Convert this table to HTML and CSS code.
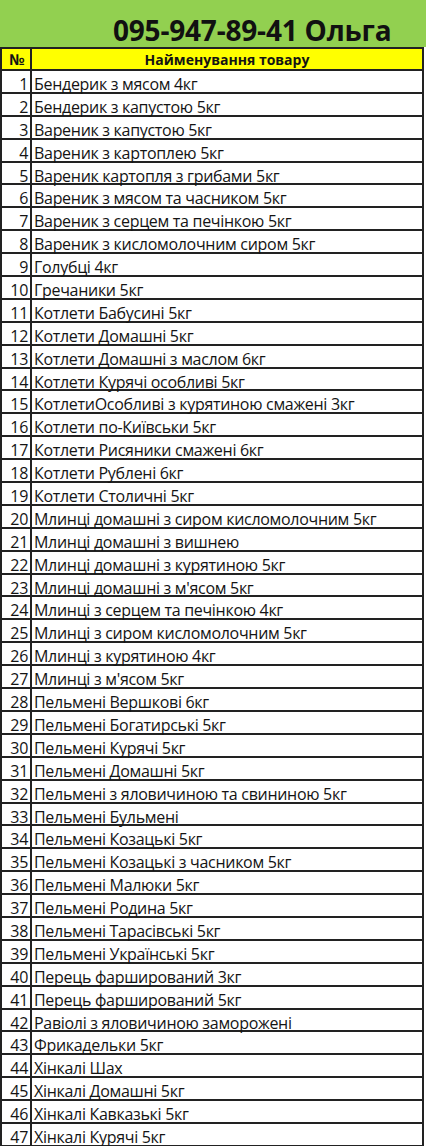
FILE: index.html
```html
<!DOCTYPE html>
<html lang="uk">
<head>
<meta charset="utf-8">
<title>Прайс</title>
<link rel="stylesheet" href="styles.css">
</head>
<body>
<div class="banner"><span class="phone">095-947-89-41 Ольга</span></div>
<table class="list">
<thead>
<tr><th class="num">№</th><th class="name">Найменування товару</th></tr>
</thead>
<tbody>
<tr><td class="num">1</td><td>Бендерик з мясом 4кг</td></tr>
<tr><td class="num">2</td><td>Бендерик з капустою 5кг</td></tr>
<tr><td class="num">3</td><td>Вареник з капустою 5кг</td></tr>
<tr><td class="num">4</td><td>Вареник з картоплею 5кг</td></tr>
<tr><td class="num">5</td><td>Вареник картопля з грибами 5кг</td></tr>
<tr><td class="num">6</td><td>Вареник з мясом та часником 5кг</td></tr>
<tr><td class="num">7</td><td>Вареник з серцем та печінкою 5кг</td></tr>
<tr><td class="num">8</td><td>Вареник з кисломолочним сиром 5кг</td></tr>
<tr><td class="num">9</td><td>Голубці 4кг</td></tr>
<tr><td class="num">10</td><td>Гречаники 5кг</td></tr>
<tr><td class="num">11</td><td>Котлети Бабусині 5кг</td></tr>
<tr><td class="num">12</td><td>Котлети Домашні 5кг</td></tr>
<tr><td class="num">13</td><td>Котлети Домашні з маслом 6кг</td></tr>
<tr><td class="num">14</td><td>Котлети Курячі особливі 5кг</td></tr>
<tr><td class="num">15</td><td>КотлетиОсобливі з курятиною смажені 3кг</td></tr>
<tr><td class="num">16</td><td>Котлети по-Київськи 5кг</td></tr>
<tr><td class="num">17</td><td>Котлети Рисяники смажені 6кг</td></tr>
<tr><td class="num">18</td><td>Котлети Рублені 6кг</td></tr>
<tr><td class="num">19</td><td>Котлети Столичні 5кг</td></tr>
<tr><td class="num">20</td><td>Млинці домашні з сиром кисломолочним 5кг</td></tr>
<tr><td class="num">21</td><td>Млинці домашні з вишнею</td></tr>
<tr><td class="num">22</td><td>Млинці домашні з курятиною 5кг</td></tr>
<tr><td class="num">23</td><td>Млинці домашні з м'ясом 5кг</td></tr>
<tr><td class="num">24</td><td>Млинці з серцем та печінкою 4кг</td></tr>
<tr><td class="num">25</td><td>Млинці з сиром кисломолочним 5кг</td></tr>
<tr><td class="num">26</td><td>Млинці з курятиною 4кг</td></tr>
<tr><td class="num">27</td><td>Млинці з м'ясом 5кг</td></tr>
<tr><td class="num">28</td><td>Пельмені Вершкові 6кг</td></tr>
<tr><td class="num">29</td><td>Пельмені Богатирські 5кг</td></tr>
<tr><td class="num">30</td><td>Пельмені Курячі 5кг</td></tr>
<tr><td class="num">31</td><td>Пельмені Домашні 5кг</td></tr>
<tr><td class="num">32</td><td>Пельмені з яловичиною та свининою 5кг</td></tr>
<tr><td class="num">33</td><td>Пельмені Бульмені</td></tr>
<tr><td class="num">34</td><td>Пельмені Козацькі 5кг</td></tr>
<tr><td class="num">35</td><td>Пельмені Козацькі з часником 5кг</td></tr>
<tr><td class="num">36</td><td>Пельмені Малюки 5кг</td></tr>
<tr><td class="num">37</td><td>Пельмені Родина 5кг</td></tr>
<tr><td class="num">38</td><td>Пельмені Тарасівські 5кг</td></tr>
<tr><td class="num">39</td><td>Пельмені Українські 5кг</td></tr>
<tr><td class="num">40</td><td>Перець фарширований 3кг</td></tr>
<tr><td class="num">41</td><td>Перець фарширований 5кг</td></tr>
<tr><td class="num">42</td><td>Равіолі з яловичиною заморожені</td></tr>
<tr><td class="num">43</td><td>Фрикадельки 5кг</td></tr>
<tr><td class="num">44</td><td>Хінкалі Шах</td></tr>
<tr><td class="num">45</td><td>Хінкалі Домашні 5кг</td></tr>
<tr><td class="num">46</td><td>Хінкалі Кавказькі 5кг</td></tr>
<tr><td class="num">47</td><td>Хінкалі Курячі 5кг</td></tr>
</tbody>
</table>
</body>
</html>
```
FILE: styles.css
```css
html, body {
  margin: 0;
  padding: 0;
  background: #ffffff;
}
body {
  font-family: "Open Sans", "Liberation Sans", sans-serif;
  color: #141414;
  width: 426px;
  overflow: hidden;
}
.banner {
  background: #92d050;
  height: 47px;
  box-sizing: border-box;
  padding-left: 113px;
  display: flex;
  align-items: flex-end;
  padding-bottom: 0;
}
.phone {
  font-weight: 700;
  font-size: 28px;
  line-height: 34px;
  color: #111;
  letter-spacing: -0.2px;
}
.list {
  border-collapse: collapse;
  width: 424px;
  table-layout: fixed;
}
.list th, .list td {
  border: 2px solid #222;
  padding: 6px 3px 0 3px;
  height: 14.9px;
  font-size: 16px;
  line-height: 14px;
  letter-spacing: -0.3px;
  white-space: nowrap;
  vertical-align: top;
}
.list th {
  background: #ffff00;
  font-weight: 700;
  font-size: 14px;
  letter-spacing: 0;
  padding-top: 1px;
  height: 19px;
  line-height: 19px;
}
.list .num {
  width: 26px;
  text-align: right;
  padding-right: 2px;
  padding-left: 0;
}
.list th.num {
  text-align: center;
  font-size: 15px;
  padding-left: 2px;
  padding-right: 0;
}
.list th.name {
  text-align: center;
}
.list td:not(.num) {
  padding-left: 2px;
}
```
